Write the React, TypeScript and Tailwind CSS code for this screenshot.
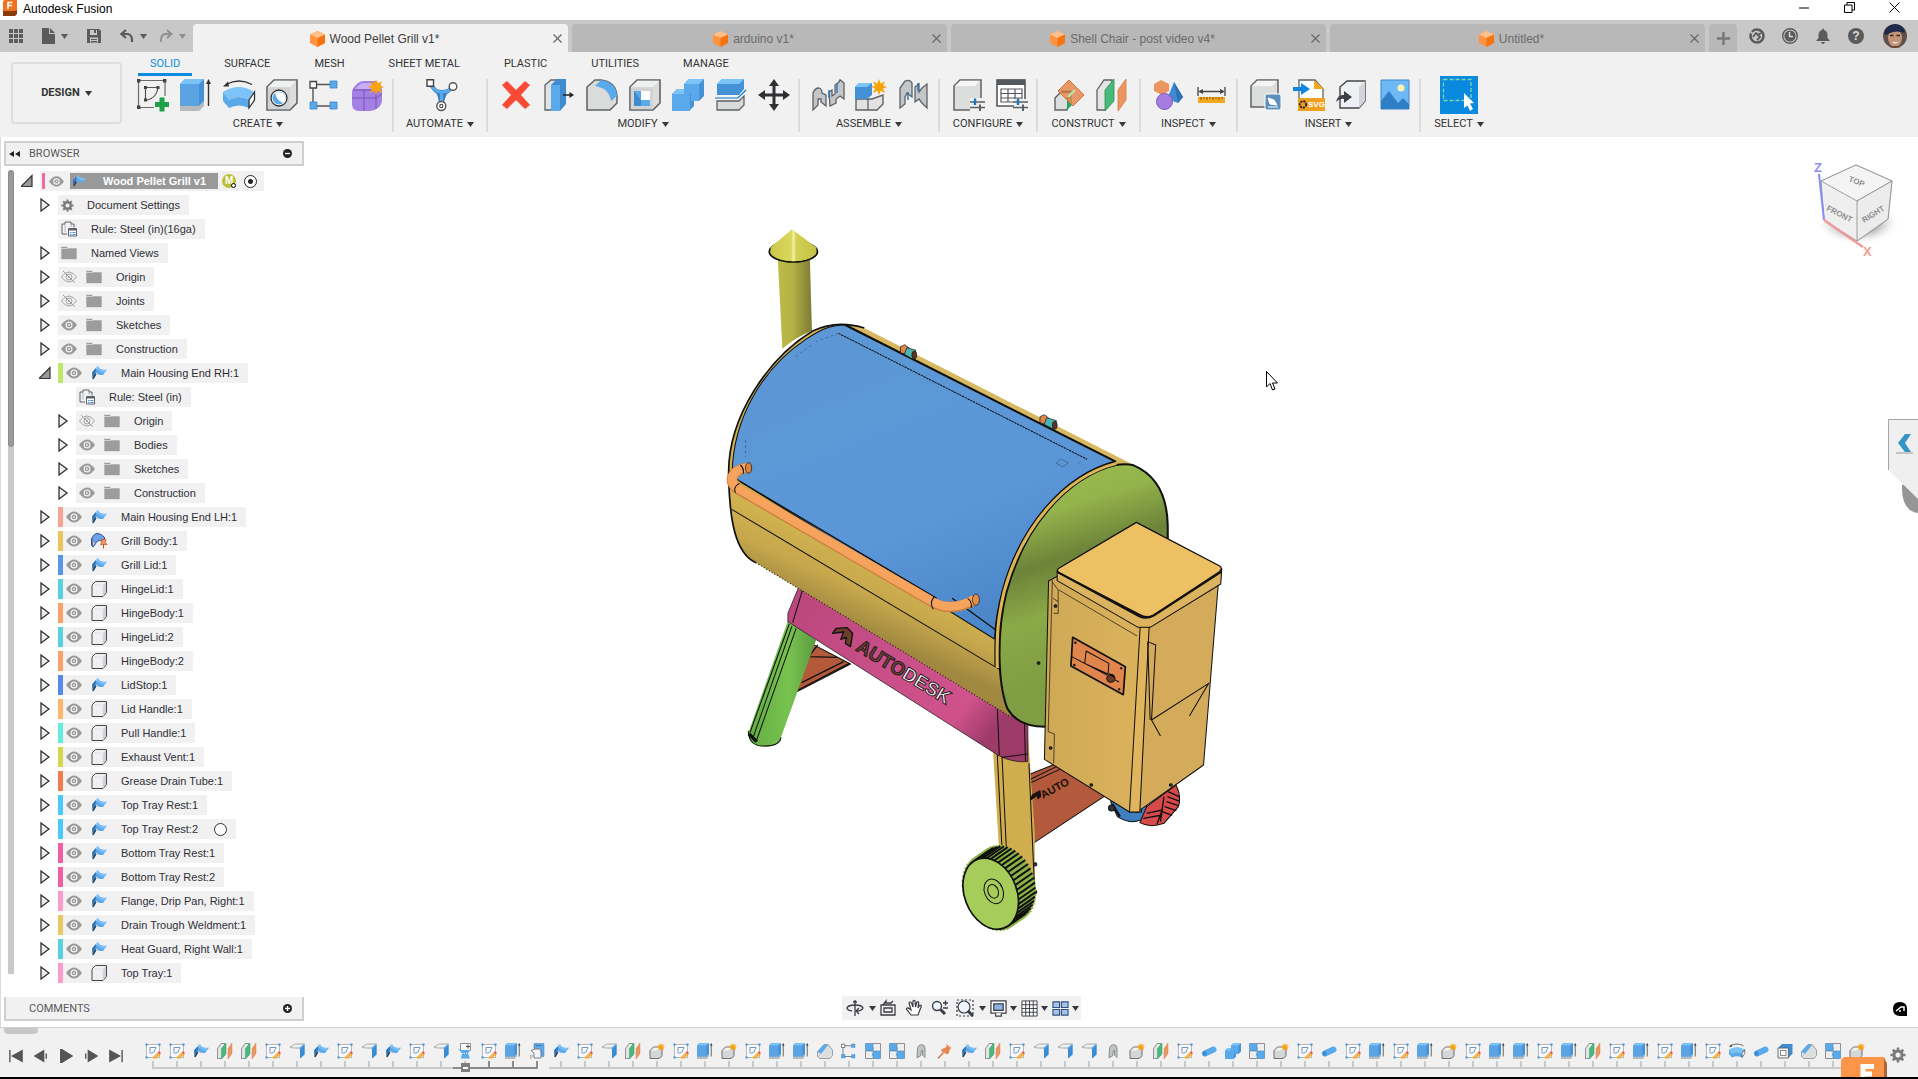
import type { ReactNode } from 'react'

const blue = '#5aa9ea';
const blueTop = '#7cc3f8';
const line = '#5f6266';

const cubeGray = (
  <>
    <path d="M1 8 L8 1 H31 V24 L24 31 H1Z" fill="#dcdddd" stroke={line} strokeWidth="1.6" />
    <path d="M1.8 8.5 H24 V30.2 H1.8Z" fill="#d2d3d4" />
    <path d="M2 8 L8.5 1.8 H30 L24 8Z" fill="#f0f1f1" />
  </>
);

const star = (
  <path d="M24 0 L25.7 4.6 L30.2 2.2 L28 6.6 L32 8 L28 9.6 L30.2 14 L25.7 11.8 L24 16 L22.3 11.8 L17.8 14 L20 9.6 L16 8 L20 6.6 L17.8 2.2 L22.3 4.6Z" fill="#f7a30b" />
);

const config = (
  <>
    <path d="M17 23 H32 M17 28.5 H32" stroke="#5c5f63" strokeWidth="1.6" />
    <path d="M22 19.5 V26" stroke="#1377c8" strokeWidth="2.4" />
    <path d="M27 25.5 V32" stroke="#5c5f63" strokeWidth="2" />
  </>
);

const icons: Record<string, ReactNode> = {
  sketch: (
    <>
      <path d="M1.5 1.5 H28 V17 M1.5 1.5 V28.5 H17" fill="none" stroke="#6b6b6b" strokeWidth="1.2" />
      <path d="M0 0 h3.4 v3.4 h-3.4Z M26 0 h3.4 v3.4 h-3.4Z M0 26.5 h3.4 v3.4 h-3.4Z" fill="#444" />
      <path d="M8 8.5 H21 M8.5 8 V21 M21 8.5 Q20 19 9 21.5" fill="none" stroke="#555" strokeWidth="1.2" />
      <path d="M7 7 h3 v3 h-3Z M19.5 7 h3 v3 h-3Z M7 19.5 h3 v3 h-3Z" fill="#444" />
      <path d="M22.5 18.5 h5 v4.5 h4.5 v5 h-4.5 v4.5 h-5 v-4.5 h-4.5 v-5 h4.5Z" fill="#1fa04a" />
    </>
  ),
  extrude: (
    <>
      <path d="M0 27 H19 L24 22 V27 L19 32 H0Z" fill="#b9babb" />
      <path d="M0 5 L5 0 H24 V22 L19 27 H0Z" fill="#4491d6" />
      <path d="M0 5 H19 V27 H0Z" fill="#5ba4e4" />
      <path d="M0 5 L5 0 H24 L19 5Z" fill={blueTop} />
      <path d="M28.5 27 V3" stroke="#333" strokeWidth="1.4" />
      <path d="M28.5 0 L31 5 H26Z" fill="#333" />
    </>
  ),
  revolve: (
    <>
      <path d="M3 5.5 Q16 -1.5 29 5.5" fill="none" stroke="#333" strokeWidth="1.4" />
      <path d="M0 7.5 L5 2.5 L6 7.5Z" fill="#333" />
      <path d="M0 13 Q16 3 31 13 L26 21 Q16 15 6 21Z" fill={blueTop} />
      <path d="M0 13 L6 21 Q16 15 26 21 V29 Q16 24 6 29 L0 22Z" fill={blue} />
      <path d="M26 21 L31.5 13 V21 L26 29Z" fill="#fff" stroke="#333" strokeWidth="1.3" />
    </>
  ),
  hole: (
    <>
      {cubeGray}
      <circle cx="13" cy="19" r="8" fill="#fff" stroke="#333" strokeWidth="1.3" />
      <circle cx="13" cy="19" r="6.5" fill={blue} />
      <path d="M9 13.500 Q18 11 19.500 19 Q19 23 17 24 Q10 21 9 13.500Z" fill="#fff" />
    </>
  ),
  pattern: (
    <>
      <path d="M4 5.5 H24 M4 6 V27 M4 27 H24" stroke="#555" strokeWidth="1.4" />
      <path d="M1 2.5 h6.5 v6.5 h-6.5Z" fill="#fff" stroke="#444" strokeWidth="1.3" />
      <path d="M21 2 h7 v7 h-7Z M1 23 h7 v7 h-7Z M21 23 h7 v7 h-7Z" fill={blue} stroke="#3b86c9" strokeWidth="0.8" />
    </>
  ),
  form: (
    <>
      <path d="M0 14 Q0 9 4 6 Q7 2 12 2 H22 Q30 4 30 12 V22 Q29 28 24 30 Q22 32 14 32 H7 Q0 32 0 25Z" fill="#a580e4" />
      <path d="M2 12 Q7 4 12 4 H22 Q27 6 27 10 H4Z" fill="#c8adf6" />
      <path d="M12 10 V32 M0 19 H24 L30 15 M24 10 V30 M1 11 H25" fill="none" stroke="#6b4bab" strokeWidth="0.8" />
      {star}
    </>
  ),
  automate: (
    <>
      <path d="M4 5 L10 12 Q16 14 22 12 L27 8 M11 12 Q15 17 15 27 M21 12 Q16 17 16 27" fill="none" stroke="#3d7fc0" strokeWidth="4" />
      <path d="M4 5 L10 12 Q16 14 22 12 L27 8 M15.5 14 V26" fill="none" stroke={blue} strokeWidth="3" />
      <path d="M1 0.8 h6.5 v6.5 h-6.5Z" fill="#fff" stroke="#444" strokeWidth="1.4" />
      <circle cx="27" cy="7.5" r="3.8" fill="#fff" stroke="#555" strokeWidth="1.4" />
      <circle cx="15.3" cy="27" r="4.5" fill="#fff" stroke="#555" strokeWidth="1.4" />
      <circle cx="15.3" cy="27" r="1.6" fill="none" stroke="#555" strokeWidth="1.2" />
    </>
  ),
  remove: <path d="M2 6 L7 2 L16 11 L25 2 L30 6 L21 16 L30 26 L25 30 L16 21 L7 30 L2 26 L11 16Z" fill="#f84a34" />,
  pressPull: (
    <>
      <path d="M2 6 L8 1 H14 V26 L8 31 H2Z" fill="#e2e2e2" stroke={line} strokeWidth="1.3" />
      <path d="M8 6 L14 0 H23 V25 L17 32 H8Z" fill="#3f8bd0" />
      <path d="M8 6 H17 V32 H8Z" fill={blue} />
      <path d="M20 16 H28" stroke="#222" strokeWidth="1.5" />
      <path d="M31 16 L26.5 13 V19Z" fill="#222" />
    </>
  ),
  fillet: (
    <>
      <path d="M1 8 L9 1 H15 Q30 3 31 17 V24 L24 31 H1Z" fill="#dadbdb" stroke={line} strokeWidth="1.5" />
      <path d="M9 7 L15 1 Q30 3 31 17 L25 22 Q23 9 9 7Z" fill={blue} />
    </>
  ),
  shell: (
    <>
      {cubeGray}
      <path d="M5 12 H21 V27 H5Z" fill={blue} />
      <path d="M12 12 H21 V21 H12Z" fill="#fff" />
      <path d="M5 12 L12 21 V27 H5Z" fill="#3f8bd0" />
    </>
  ),
  combine: (
    <>
      <path d="M0 15 L5 10 H12 V5 L17 0 H32 V17 L27 22 H22 V27 L17 32 H0Z" fill="#4491d6" />
      <path d="M12 5 H27 V22 H19 V15 H12Z M0 15 H18 V32 H0Z" fill={blue} />
      <path d="M12 5 L17 0 H32 L27 5Z M0 15 L5 10 H12 V15Z" fill={blueTop} />
    </>
  ),
  split: (
    <>
      <path d="M2 5 L7 0 H29 V10 L24 16 H2Z" fill="#4491d6" />
      <path d="M2 5 L7 0 H29 L24 5Z" fill={blueTop} />
      <path d="M0 19 H23 L31 11" fill="none" stroke="#1377c8" strokeWidth="1.2" />
      <path d="M2 22 H24 L29 17 V26 L24 31 H2Z" fill="#d9dada" stroke={line} strokeWidth="1.3" />
    </>
  ),
  move: <path d="M16 0 L21 7 H17.5 V14.5 H25 V11 L32 16 L25 21 V17.5 H17.5 V25 H21 L16 32 L11 25 H14.5 V17.5 H7 V21 L0 16 L7 11 V14.5 H14.5 V7 H11Z" fill="#2e3033" />,
  joint: (
    <>
      <path d="M1 14 Q3 9 7 9 Q10 10 10 14 L14 16 V27 L9 23 V20 H6 V26 L1 31Z" fill="#c4c6c8" stroke={line} strokeWidth="1.3" />
      <path d="M17 13 L20 11 V17 L23 15 V6 L27 3 L28 0.8 L32 4 V20 L28 17 L24 20 V24 L18 27Z" fill="#c4c6c8" stroke={line} strokeWidth="1.3" />
      <path d="M17 11 V19 M25 5 V14" stroke="#1377c8" strokeWidth="1.3" />
    </>
  ),
  newComponent: (
    <>
      <path d="M1 20 H17 L28 16 V25 L22 31 H1Z" fill="#e2e2e2" stroke={line} strokeWidth="1.4" />
      <path d="M13 20 V31" stroke={line} strokeWidth="1.3" />
      <path d="M0 8 L4 4 H17 V16 L12 20 H0Z" fill="#4491d6" />
      <path d="M0 8 L4 4 H17 L12 8Z" fill={blueTop} />
      {star}
    </>
  ),
  asBuilt: (
    <>
      <path d="M2 9 L7 2 Q12 0 14 4 V18 L9 14 L7 18 V25 L2 29Z" fill="#c4c6c8" stroke={line} strokeWidth="1.3" />
      <path d="M17 8 L21 5 V13 L24 9 L29 5 V29 L24 24 L21 20 L17 23Z" fill="#c4c6c8" stroke={line} strokeWidth="1.3" />
      <path d="M10 13 V21 M20 4 V12" stroke="#1377c8" strokeWidth="1.4" />
    </>
  ),
  configure: (
    <>
      <path d="M1 7 L7 1 H28 V24 L22 31 H1Z" fill="#dcdddd" stroke={line} strokeWidth="1.5" />
      <path d="M2 7 L7.5 1.8 H27 L22 7Z" fill="#f5f5f5" />
      <path d="M17 19 H32 V32 H17Z" fill="#f1f1f1" />
      {config}
    </>
  ),
  configTable: (
    <>
      <path d="M1 1 H29 V27 H1Z" fill="#fff" stroke="#55585c" strokeWidth="1.6" />
      <path d="M1 0.5 H29 V6 H1Z" fill="#55585c" />
      <path d="M5 10 H26 V23 H5Z M12 10 V23 M19 10 V23 M5 14.5 H26 M5 19 H26" fill="none" stroke="#55585c" strokeWidth="1.2" />
      <path d="M18 20 H32 V32 H18Z" fill="#f1f1f1" />
      {config}
    </>
  ),
  planeAngle: (
    <>
      <path d="M2 19 L9 12 H19 L14 31 H2Z" fill="#dcdddd" stroke={line} strokeWidth="1.4" />
      <path d="M14 20 L19 12 V26 L14 31Z" fill="#1fa565" />
      <path d="M16 1 L31 16 L20 27 L5 12Z" fill="#e88a50" fillOpacity="0.85" stroke="#d27237" strokeWidth="1" />
      <path d="M9 13 H20 L14 20" fill="none" stroke="#8c6a4c" />
      <path d="M15 18 L22 11" stroke="#bfe3a8" strokeWidth="2.4" />
    </>
  ),
  offsetPlane: (
    <>
      <path d="M1 11 L8 1 H16 V22 L9 31 H1Z" fill="#e4e4e4" stroke={line} strokeWidth="1.3" />
      <path d="M9 11 L18 0 V22 L9 32Z" fill="#49b87b" stroke="#249255" strokeWidth="0.8" />
      <path d="M22 11 L30 0 V21 L22 32Z" fill="#eb9561" stroke="#d97b43" strokeWidth="0.8" />
    </>
  ),
  inspect: (
    <>
      <path d="M8 1 L16 5 V12 L9 16 L1 12 V5Z" fill="#eb9561" />
      <path d="M21 3 L30 18 L25 24 L14 20Z" fill="#3f8bd0" />
      <path d="M21 3 L30 18 L25 24Z" fill="#2f70b2" />
      <circle cx="11.5" cy="22.5" r="8" fill="#a57de0" stroke="#8257c0" />
    </>
  ),
  measure: (
    <>
      <path d="M2 8 V17 M29 8 V17 M4 12.5 H27" stroke="#444" strokeWidth="1.3" />
      <path d="M2 12.5 L7 10 V15Z M29 12.5 L24 10 V15Z" fill="#444" />
      <path d="M2 18 H29 V24 H2Z" fill="#f6a821" />
      <path d="M5 18 v3 M8 18 v2 M11 18 v3 M14 18 v2 M17 18 v3 M20 18 v2 M23 18 v3 M26 18 v2" stroke="#7d5510" />
    </>
  ),
  derive: (
    <>
      <path d="M1 7 L7 1 H28 V24 L22 28 H1Z" fill="#dcdddd" stroke={line} strokeWidth="1.5" />
      <path d="M2 7 L7.5 1.8 H27 L22 7Z" fill="#f5f5f5" />
      <rect x="15" y="15" width="16" height="16" rx="2" fill="#5d8fbd" stroke="#fff" />
      <path d="M18 19 L24 21 L27 26 L20 25Z M18 28 H28" fill="#fff" stroke="#fff" />
    </>
  ),
  insertSvg: (
    <>
      <path d="M6 1 H22 L30 10 V31 H6Z" fill="#fff" stroke={line} strokeWidth="1.3" />
      <path d="M21 1 L31 10 H21Z" fill="#f6a821" />
      <path d="M5 19 H32 V32 H5Z" fill="#f0a020" />
      <circle cx="10" cy="25.5" r="3.2" fill="none" stroke="#222" strokeWidth="2" strokeDasharray="2 1" />
      <text x="15" y="28" fontSize="8" fontWeight="bold" fill="#fff" fontFamily="Liberation Sans, sans-serif">SVG</text>
      <path d="M0 8 H8 V4 L17 10 L8 16 V12 H0Z" fill="#0f86e4" />
    </>
  ),
  insertMesh: (
    <>
      <path d="M4 8 L11 2 H29 V22 L23 29 H4Z" fill="#eef0f3" stroke="#444" strokeWidth="1.4" />
      <path d="M23 8 L29 2 V22 L23 29Z" fill="#d3d5da" />
      <path d="M0 23 Q2 15 8 16 V12 L16 18 L8 24 V20 Q4 19 0 23Z" fill="#3c3f45" />
    </>
  ),
  canvas: (
    <>
      <path d="M2 1 H30 V30 H2Z" fill="#6db8f5" stroke="#3c86c8" />
      <path d="M2 22 L10 12 L19 24 L24 19 L30 25 V30 H2Z" fill="#2f7fc6" />
      <circle cx="22" cy="9" r="3.5" fill="#fdf3b4" />
    </>
  ),
  editSketch: (
    <>
      <path d="M3 3 H29 V29 H3Z" fill="#fafafa" stroke="#a3a6aa" strokeWidth="1.6" />
      <path d="M1 1 h4 v4 h-4Z M27 1 h4 v4 h-4Z M1 27 h4 v4 h-4Z" fill="#3e8edb" />
      <path d="M10 9 H22 V11 M10 9 V21 M21 11 Q20 20 12 21" fill="none" stroke="#5d8bc4" strokeWidth="1.8" />
      <path d="M17 27 L25 19 L30 23 L22 31 L16 32Z" fill="#f6b23b" />
      <path d="M25 19 L28 16 L32 20 L30 23Z" fill="#e8604c" />
    </>
  ),
  flange: (
    <>
      <path d="M2 15 L10 6 L16 11 Q24 15 32 9 L24 20 Q14 21 10 16Z" fill={blue} />
      <path d="M10 3 L15 3 Q18 11 32 9 L27 15 Q15 16 10 3Z" fill="#79bdf5" />
      <path d="M2 15 L10 6 L9 19 L3 29Z" fill="#2f73b8" />
      <path d="M4 28 L10 18" stroke="#333" strokeWidth="2.5" />
    </>
  ),
  bend: (
    <>
      <path d="M2 8 L12 2 H31 L22 10 H8Z" fill="#eef0f2" stroke="#888c90" strokeWidth="1.4" />
      <path d="M20 10 L31 2 V23 L22 31 V13Z" fill={blue} />
      <path d="M22 13 L31 4 V23 L22 31Z" fill="#3a8ad6" />
    </>
  ),
  unfold: (
    <>
      <path d="M7 1 H27 V15 H7Z" fill="#fafafa" stroke="#777" strokeWidth="1.6" />
      <path d="M18 7 H26 M22 3 V11" stroke="#555" strokeWidth="2" />
      <path d="M2 11 L8 14 H26 L22 21 L26 31 H8 L10 21Z" fill={blue} />
      <path d="M10 21 H22" stroke="#fff" strokeWidth="1.5" strokeDasharray="2 2" />
    </>
  ),
  refold: (
    <>
      <path d="M10 1 H30 V27 H24 V11 H10Z" fill={blue} stroke="#3d7fc0" />
      <path d="M4 15 L12 12 H22 L24 18 V30 H10 V20Z" fill="#f2f2f2" stroke="#777" strokeWidth="1.8" />
      <path d="M2 26 H8 M2 30 H6 M13 5 H26" stroke="#555" strokeWidth="1.5" strokeDasharray="3 1" />
    </>
  ),
  component: (
    <>
      <path d="M2 15 L9 8 H26 V25 Q24 31 18 31 H2Z" fill="#d5d6d6" stroke="#6d7073" strokeWidth="2" />
      <path d="M4 15 L10 9.5 H22 L17 15Z" fill="#f2f2f2" />
      {star}
    </>
  ),
  chamfer: (
    <>
      <path d="M1 17 L14 3 H22 L31 14 V25 L26 31 H6 L1 27Z" fill="#dddede" stroke="#8a8d90" strokeWidth="1.6" />
      <path d="M1 17 L14 3 L22 4 L8 22Z" fill={blue} />
    </>
  ),
  checker: (
    <>
      <path d="M1 1 H31 V31 H1Z" fill="#eee" stroke="#777" strokeWidth="1.6" />
      <path d="M1 1 H16 V8 Q20 12 16 13 V16 H1Z M16 16 H31 V31 H16 V26 Q11 23 16 20Z" fill={blue} />
      <path d="M16 16 H12 Q10 12 7 16 M16 1 V31 M1 16 H31" stroke="#5f87aa" strokeWidth="1.2" fill="none" />
    </>
  ),
  smallJoint: (
    <path d="M9 9 Q12 3 17 3 Q24 4 24 10 V29 L19 24 V14 L16 18 V25 L8 30Z" fill="#c0c2c4" stroke="#85888b" strokeWidth="1.8" />
  ),
  pin: (
    <>
      <path d="M18 2 L29 10 L26 12 L24 20 L20 23 L7 15 L12 11 L19 8Z" fill="#e88a50" />
      <path d="M2 31 L13 19" stroke="#cf6f35" strokeWidth="2.5" />
    </>
  ),
  tube: (
    <>
      <path d="M8 21 L25 13" stroke={blue} strokeWidth="12" strokeLinecap="round" />
      <ellipse cx="7" cy="21" rx="4" ry="5" fill="#3a8ad6" />
    </>
  ),
  shellBox: (
    <>
      <path d="M2 10 L10 2 H31 V21 L23 30 H2Z" fill="#3f8bd0" />
      <path d="M2 10 H23 V30 H2Z" fill="#eef0f2" stroke="#555" strokeWidth="1.6" />
      <path d="M7 15 H18 V25 H7Z" fill="#fff" stroke="#666" strokeWidth="1.5" />
    </>
  ),
  body: (
    <>
      <path d="M2 8 L9 1 H31 V23 L24 31 H2Z" fill="#eff0f2" stroke="#44474e" strokeWidth="2" strokeLinejoin="round" />
      <path d="M24 8 L30 2 V22 L24 30Z" fill="#cfd1d6" />
      <path d="M3 8 H24 V30" fill="none" stroke="#d9dbde" strokeWidth="1.2" />
    </>
  ),
  pinnedFlange: (
    <>
      <path d="M1 12 Q6 0 14 1 Q22 2 28 10 L22 16 Q16 13 12 17 L4 28 L1 24Z" fill="#6da3ea" stroke="#2b3f78" strokeWidth="1.8" />
      <path d="M2 13 L10 20 L4 28Z" fill="#b9bfd8" stroke="#2b3f78" />
      <path d="M20 13 h10 l-2 5 l4 5 h-13 l3 -5Z" fill="#f49a5c" stroke="#b9501d" strokeWidth="1.5" />
      <path d="M25 23 V31" stroke="#b9501d" strokeWidth="2" />
    </>
  ),
  folder: <path d="M0 3 H12 L14 6 H32 V29 H0Z M0 7 H14" fill="#9c9c9e" stroke="#f1f1f1" strokeWidth="1.2" />,
  gear: (
    <>
      <circle cx="16" cy="16" r="8" fill="none" stroke="#7b7b7d" strokeWidth="6" />
      <path d="M16 1 V7 M16 25 V31 M1 16 H7 M25 16 H31 M5.5 5.5 L10 10 M22 22 L26.5 26.5 M26.5 5.5 L22 10 M5.5 26.5 L10 22" stroke="#7b7b7d" strokeWidth="5" />
    </>
  ),
  rule: (
    <>
      <path d="M2 6 H8 V2 H20 V6 H26 V13 M2 6 V26 H12" fill="none" stroke="#5e6268" strokeWidth="2" />
      <path d="M8 7 V21 M20 7 V12" stroke="#5e6268" strokeWidth="1.5" strokeDasharray="2 2" />
      <path d="M15 15 H31 V30 H15Z" fill="#fff" stroke="#5e6268" strokeWidth="2" />
      <path d="M15 16 H31 V19 H15Z" fill="#5e6268" />
      <path d="M18 23 H21 M23 23 H29 M18 27 H21 M23 27 H29" stroke="#3e8edb" strokeWidth="2" />
    </>
  ),
  eye: (
    <>
      <path d="M0 16 Q8 5 16 5 Q24 5 32 16 Q24 27 16 27 Q8 27 0 16Z" fill="#9a9a9c" />
      <circle cx="16" cy="16" r="7" fill="#f1f1f1" />
      <circle cx="16" cy="16" r="4.5" fill="#9a9a9c" />
      <circle cx="16" cy="16" r="1.8" fill="#f1f1f1" />
    </>
  ),
  eyeOff: (
    <>
      <path d="M1 16 Q8 6 16 6 Q24 6 31 16 Q24 26 16 26 Q8 26 1 16Z" fill="none" stroke="#9a9a9c" strokeWidth="1.8" />
      <circle cx="16" cy="16" r="6" fill="none" stroke="#9a9a9c" strokeWidth="1.8" />
      <circle cx="16" cy="16" r="2" fill="#9a9a9c" />
      <path d="M4 4 L28 28" stroke="#9a9a9c" strokeWidth="1.8" />
    </>
  ),
};

const Icon = ({ name, className = 'size-8' }: { name: string; className?: string }) => (
  <svg viewBox="0 0 32 32" className={`shrink-0 overflow-visible ${className}`} aria-hidden="true">{icons[name]}</svg>
);

const Caret = ({ className = 'text-[#3a3a3a]' }: { className?: string }) => (
  <svg viewBox="0 0 7 5" className={`h-[5px] w-[7px] shrink-0 ${className}`} aria-hidden="true">
    <path d="M0 0 H7 L3.5 5Z" fill="currentColor" />
  </svg>
);

const DocCube = () => (
  <svg viewBox="0 0 15 16" className="h-4 w-[15px] shrink-0" aria-hidden="true">
    <path d="M7.5 0 L15 3.5 V12 L7.5 16 L0 12 V3.5Z" fill="#ff9340" />
    <path d="M7.5 0 L15 3.5 L7.5 7 L0 3.5Z" fill="#ffc08c" />
    <path d="M7.5 7 L15 3.5 V12 L7.5 16Z" fill="#f57310" />
  </svg>
);

const docs = [
  { name: 'Wood Pellet Grill v1*', active: true },
  { name: 'arduino v1*', active: false },
  { name: 'Shell Chair - post video v4*', active: false },
  { name: 'Untitled*', active: false },
];

const ribbonTabs = ['SOLID', 'SURFACE', 'MESH', 'SHEET METAL', 'PLASTIC', 'UTILITIES', 'MANAGE'];

const groups = [
  { label: 'CREATE', cls: 'w-[264px] pr-[6px]', items: ['sketch', 'extrude', 'revolve', 'hole', 'pattern', 'form'] },
  { label: 'AUTOMATE', cls: 'w-[94px]', items: ['automate'] },
  { label: 'MODIFY', cls: 'w-[312px]', items: ['remove', 'pressPull', 'fillet', 'shell', 'combine', 'split', 'move'] },
  { label: 'ASSEMBLE', cls: 'w-[140px]', items: ['joint', 'newComponent', 'asBuilt'] },
  { label: 'CONFIGURE', cls: 'w-[98px]', items: ['configure', 'configTable'] },
  { label: 'CONSTRUCT', cls: 'w-[103px]', items: ['planeAngle', 'offsetPlane'] },
  { label: 'INSPECT', cls: 'w-[97px]', items: ['inspect', 'measure'] },
  { label: 'INSERT', cls: 'w-[183px]', items: ['derive', 'insertSvg', 'insertMesh', 'canvas'] },
];

type Node = {
  label: string;
  kind: string;
  level?: number;
  open?: boolean;
  eye?: 'eye' | 'eyeOff';
  color?: string;
  leaf?: boolean;
  ring?: boolean;
};

const nodes: Node[] = [
  { label: 'Document Settings', kind: 'gear' },
  { label: 'Rule: Steel (in)(16ga)', kind: 'rule', leaf: true },
  { label: 'Named Views', kind: 'folder' },
  { label: 'Origin', kind: 'folder', eye: 'eyeOff' },
  { label: 'Joints', kind: 'folder', eye: 'eyeOff' },
  { label: 'Sketches', kind: 'folder', eye: 'eye' },
  { label: 'Construction', kind: 'folder', eye: 'eye' },
  { label: 'Main Housing End RH:1', kind: 'flange', eye: 'eye', color: 'bg-[#bce86c]', open: true },
  { label: 'Rule: Steel (in)', kind: 'rule', level: 2, leaf: true },
  { label: 'Origin', kind: 'folder', eye: 'eyeOff', level: 2 },
  { label: 'Bodies', kind: 'folder', eye: 'eye', level: 2 },
  { label: 'Sketches', kind: 'folder', eye: 'eye', level: 2 },
  { label: 'Construction', kind: 'folder', eye: 'eye', level: 2 },
  { label: 'Main Housing End LH:1', kind: 'flange', eye: 'eye', color: 'bg-[#f4a394]' },
  { label: 'Grill Body:1', kind: 'pinnedFlange', eye: 'eye', color: 'bg-[#eac55f]' },
  { label: 'Grill Lid:1', kind: 'flange', eye: 'eye', color: 'bg-[#5796e6]' },
  { label: 'HingeLid:1', kind: 'body', eye: 'eye', color: 'bg-[#5ad0de]' },
  { label: 'HingeBody:1', kind: 'body', eye: 'eye', color: 'bg-[#fba068]' },
  { label: 'HingeLid:2', kind: 'body', eye: 'eye', color: 'bg-[#5ad0de]' },
  { label: 'HingeBody:2', kind: 'body', eye: 'eye', color: 'bg-[#fba068]' },
  { label: 'LidStop:1', kind: 'flange', eye: 'eye', color: 'bg-[#5789ec]' },
  { label: 'Lid Handle:1', kind: 'body', eye: 'eye', color: 'bg-[#fdb66c]' },
  { label: 'Pull Handle:1', kind: 'body', eye: 'eye', color: 'bg-[#62ecdf]' },
  { label: 'Exhaust Vent:1', kind: 'body', eye: 'eye', color: 'bg-[#d3d84e]' },
  { label: 'Grease Drain Tube:1', kind: 'body', eye: 'eye', color: 'bg-[#f07e4c]' },
  { label: 'Top Tray Rest:1', kind: 'flange', eye: 'eye', color: 'bg-[#4bc9f8]' },
  { label: 'Top Tray Rest:2', kind: 'flange', eye: 'eye', color: 'bg-[#4bc9f8]', ring: true },
  { label: 'Bottom Tray Rest:1', kind: 'flange', eye: 'eye', color: 'bg-[#f05fa6]' },
  { label: 'Bottom Tray Rest:2', kind: 'flange', eye: 'eye', color: 'bg-[#f05fa6]' },
  { label: 'Flange, Drip Pan, Right:1', kind: 'flange', eye: 'eye', color: 'bg-[#fb9dcc]' },
  { label: 'Drain Trough Weldment:1', kind: 'flange', eye: 'eye', color: 'bg-[#e8c964]' },
  { label: 'Heat Guard, Right Wall:1', kind: 'flange', eye: 'eye', color: 'bg-[#5ad0de]' },
  { label: 'Top Tray:1', kind: 'body', eye: 'eye', color: 'bg-[#fb9dcc]' },
];

const timelineKeys: Record<string, string> = {
  s: 'editSketch', f: 'flange', p: 'offsetPlane', b: 'bend', u: 'unfold', e: 'extrude', r: 'refold', c: 'component',
  h: 'chamfer', t: 'pattern', k: 'checker', j: 'smallJoint', n: 'pin', o: 'tube', m: 'combine', v: 'revolve', x: 'shellBox',
};
const timeline = 'ssfppsbfsbfsbuserfsbpcsecseehtkkjnfpsbbbjcpsomkcsosesecseesepsesesvoxhkc'.split('');

const Arrow = ({ open }: { open?: boolean }) => (
  <button className="flex h-5 w-[13px] items-center" aria-label={open ? 'Collapse' : 'Expand'}>
    <svg viewBox="0 0 12 14" className="h-[14px] w-3" aria-hidden="true">
      {open ? (
        <path d="M0 12.5 L11 1.5 V12.5Z" fill="#999" stroke="#333" strokeWidth="1.2" />
      ) : (
        <path d="M2 1 L10 7 L2 13Z" fill="#eee" stroke="#333" strokeWidth="1.3" />
      )}
    </svg>
  </button>
);

const TreeRow = ({ node }: { node: Node }) => {
  const { label, kind, level, open, eye, color, leaf, ring } = node;
  return (
    <li className={`flex h-6 items-center ${level === 2 ? 'pl-[57px]' : 'pl-[39px]'}`}>
      <span className="w-[19px]">{!leaf && <Arrow open={open} />}</span>
      <div className="flex h-5 items-center bg-[#f1f1f1] pr-[9px]">
        {color && <span className={`h-5 w-[5px] ${color}`} />}
        {eye && (
          <button className="ml-[3px] flex w-[25px]" aria-label="Toggle visibility">
            <Icon name={eye} className="size-4" />
          </button>
        )}
        <Icon name={kind} className={`${eye ? '' : 'ml-[3px]'} ${kind === 'gear' ? 'size-[13px]' : 'size-4'}`} />
        <span className={`${kind === 'gear' ? 'ml-[13px]' : 'ml-[14px]'} whitespace-nowrap text-[11px] text-[#2f2f38]`}>{label}</span>
        {ring && <span className="ml-4 size-[13px] rounded-full border border-[#333] bg-white" />}
      </div>
    </li>
  );
};

const TopBar = () => (
  <>
    <header className="flex h-5 items-center justify-between bg-white pl-[3px] pr-[18px]">
      <div className="flex items-center gap-[6px]">
        <svg viewBox="0 0 14 16" className="mb-1 h-4 w-[14px]" aria-hidden="true">
          <path d="M1 0 H14 V13 L12 16 H0 V2Z" fill="#f2711c" />
          <path d="M0 11 H12 L14 10 V14 L12 16 H0Z" fill="#8a3a0c" />
          <path d="M5 9 V2.5 H9.5 M5 5.5 H9" stroke="#fff" strokeWidth="1.6" fill="none" />
        </svg>
        <h1 className="pb-[2px] text-xs leading-4 text-black">Autodesk Fusion</h1>
      </div>
      <div className="flex items-center gap-[34px] pb-[6px]">
        <button aria-label="Minimize"><svg viewBox="0 0 11 11" className="size-[11px]"><path d="M0 6 H10" stroke="#000" /></svg></button>
        <button aria-label="Restore"><svg viewBox="0 0 11 11" className="size-[11px]"><path d="M0.5 3 H8 V10.5 H0.5Z M3 3 V0.5 H10.5 V8 H8" fill="none" stroke="#000" /></svg></button>
        <button aria-label="Close"><svg viewBox="0 0 11 11" className="size-[11px]"><path d="M0.5 0.5 L10.5 10.5 M10.5 0.5 L0.5 10.5" stroke="#000" /></svg></button>
      </div>
    </header>
    <div className="flex h-8 items-end bg-[#c8c8c8]">
      <div className="flex h-8 w-[193px] shrink-0 items-center pl-[9px] text-[#5b5b5b]">
        <button aria-label="Show data panel">
          <svg viewBox="0 0 14 14" className="size-[14px]"><path d="M0 0h4v4H0zM5 0h4v4H5zM10 0h4v4h-4zM0 5h4v4H0zM5 5h4v4H5zM10 5h4v4h-4zM0 10h4v4H0zM5 10h4v4H5zM10 10h4v4h-4z" fill="currentColor" /></svg>
        </button>
        <button className="ml-[19px] flex items-center gap-[6px]" aria-label="File">
          <svg viewBox="0 0 13 16" className="h-4 w-[13px]"><path d="M0 0H7V6H13V16H0Z M8 0L13 5H8Z" fill="currentColor" /></svg>
          <Caret className="text-[#5b5b5b]" />
        </button>
        <button className="ml-[19px]" aria-label="Save">
          <svg viewBox="0 0 14 14" className="size-[14px]"><path d="M0 0H12L14 2V14H0Z" fill="currentColor" /><path d="M3 1h7v5H3z M3 8.5h8v5H3z" fill="#c8c8c8" /><path d="M7 1h2v3H7z M4 10h6v1H4z M4 12h6v1H4z" fill="currentColor" /></svg>
        </button>
        <button className="ml-[19px] flex items-center gap-[6px]" aria-label="Undo">
          <svg viewBox="0 0 14 14" className="size-[14px]"><path d="M6 1 L1.5 5 L6 9 M2 5 H8 Q12.5 6 12 13" fill="none" stroke="currentColor" strokeWidth="2.2" /></svg>
          <Caret className="text-[#5b5b5b]" />
        </button>
        <button className="ml-[12px] flex items-center gap-[6px] text-[#8e8e8e]" aria-label="Redo">
          <svg viewBox="0 0 14 14" className="size-[14px]"><path d="M8 1 L12.5 5 L8 9 M12 5 H6 Q1.5 6 2 13" fill="none" stroke="currentColor" strokeWidth="1.8" /></svg>
          <Caret className="text-[#8e8e8e]" />
        </button>
      </div>
      <nav className="flex flex-1 gap-1">
        {docs.map((d) => (
          <div key={d.name} className={`flex h-7 flex-1 items-center rounded-t pl-[10px] ${d.active ? 'bg-[#f1f1f1] text-[#3c3c3c]' : 'bg-[#b8b8b8] text-[#6a6a6a]'}`}>
            <button className="flex flex-1 items-center justify-center gap-[5px] pt-[2px] text-xs">
              <DocCube />
              {d.name}
            </button>
            <button className="flex w-[22px] justify-center" aria-label={`Close ${d.name}`}>
              <svg viewBox="0 0 9 9" className="size-[9px]"><path d="M0.5 0.5 L8.5 8.5 M8.5 0.5 L0.5 8.5" stroke="#6a6a6a" strokeWidth="1.3" /></svg>
            </button>
          </div>
        ))}
        <button className="flex h-7 w-7 items-center justify-center rounded-t bg-[#b8b8b8]" aria-label="New design">
          <svg viewBox="0 0 13 13" className="size-[13px]"><path d="M6.5 0 V13 M0 6.5 H13" stroke="#777" strokeWidth="2.4" /></svg>
        </button>
      </nav>
      <div className="flex h-8 w-[181px] shrink-0 items-center gap-[17px] pl-[12px]">
        <button aria-label="Extensions">
          <svg viewBox="0 0 16 16" className="size-4"><circle cx="8" cy="8" r="6.5" fill="none" stroke="#5b5b5b" strokeWidth="2.6" /><path d="M0 2 L4 6 L7 3" fill="none" stroke="#c8c8c8" strokeWidth="1.6" /><path d="M4 9 L7 5 L9 7 L12 5 M8 12 L11 9 L9 7" fill="none" stroke="#5b5b5b" strokeWidth="1.8" /></svg>
        </button>
        <button aria-label="Job status">
          <svg viewBox="0 0 16 16" className="size-4"><circle cx="8" cy="8" r="7.3" fill="none" stroke="#5b5b5b" strokeWidth="1.4" /><circle cx="8" cy="8" r="5.6" fill="#5b5b5b" /><path d="M7.5 4 V8.5 H11" fill="none" stroke="#ddd" strokeWidth="1.4" /></svg>
        </button>
        <button aria-label="Notifications">
          <svg viewBox="0 0 16 16" className="size-4"><path d="M8 0.5 Q9 0.5 9 2 Q12.5 3 12.5 7 V10 L15 13 H1 L3.5 10 V7 Q3.5 3 7 2 Q7 0.5 8 0.5Z M6 14 H10 Q9.5 16 8 16 Q6.5 16 6 14Z" fill="#5b5b5b" /></svg>
        </button>
        <button className="size-4 rounded-full bg-[#5b5b5b] text-xs font-bold leading-4 text-[#ddd]">?</button>
        <button className="ml-[2px]" aria-label="Account">
          <svg viewBox="0 0 24 24" className="size-6">
            <clipPath id="face"><circle cx="12" cy="12" r="12" /></clipPath>
            <g clipPath="url(#face)">
              <path d="M0 0H24V24H0Z" fill="#5d5148" />
              <ellipse cx="12" cy="14" rx="7" ry="9" fill="#c39478" />
              <path d="M1 10 Q3 0 12 0 Q21 0 22 9 Q12 5 3 11Z" fill="#1d2a4a" />
              <path d="M7 11.5 H10.5 M13.5 11.5 H17" stroke="#3a251b" strokeWidth="1.5" />
              <path d="M8.5 18 Q12 21 15.5 18Z" fill="#f1e2da" />
              <path d="M3 24 Q12 20 21 24Z" fill="#6a4436" />
            </g>
          </svg>
        </button>
      </div>
    </div>
  </>
);

const Ribbon = () => (
  <div className="flex bg-[#f1f1f1] pb-[5px] font-[Roboto,sans-serif] text-[11px] leading-4 text-[#333]">
    <button className="ml-[11px] mt-[10px] flex h-[62px] w-[111px] shrink-0 items-center justify-center gap-[5px] rounded border-2 border-[#dedede] font-bold">
      DESIGN <Caret />
    </button>
    <div className="ml-2">
      <div className="flex h-6 gap-[20px] pl-2">
        {ribbonTabs.map((t, i) => (
          <button key={t} className={`h-6 whitespace-nowrap border-b-[3px] px-3 pt-[2px] ${i === 0 ? 'border-[#0c8ce0] text-[#0c8ce0]' : 'border-transparent'}`}>{t}</button>
        ))}
      </div>
      <div className="mt-[3px] flex">
        {groups.map((g) => (
          <section key={g.label} className={`flex shrink-0 flex-col items-center border-r-2 border-[#dcdcdc] ${g.cls}`}>
            <div className="flex h-8 pl-1">
              {g.items.map((name) => (
                <button key={name} className="flex w-[43px] shrink-0 items-center justify-center" aria-label={name}>
                  <Icon name={name} />
                </button>
              ))}
            </div>
            <button className="mt-[5px] flex h-4 items-center gap-1">{g.label}<Caret /></button>
          </section>
        ))}
        <section className="flex w-[76px] flex-col items-center">
          <div className="flex h-8 items-center">
            <button className="flex h-[38px] w-[38px] items-center justify-center bg-[#0a8ade]" aria-label="Select">
              <svg viewBox="0 0 38 38" className="size-[38px]">
                <path d="M3.5 3.5 H31 V24.5 H3.5Z" fill="none" stroke="#7fd6a4" strokeWidth="1.3" strokeDasharray="4 2" />
                <path d="M24 17 L34 27 L30 27.5 L33 33 L30 35 L27.5 29.5 L24 32Z" fill="#fff" />
              </svg>
            </button>
          </div>
          <button className="mt-[5px] flex h-4 items-center gap-1">SELECT<Caret /></button>
        </section>
      </div>
    </div>
  </div>
);

const Browser = () => (
  <aside className="w-[308px] pl-1">
    <div className="flex h-[25px] w-[300px] items-center border-2 border-[#cfcfcf] bg-[#f1f1f1] pl-[3px] font-[Roboto,sans-serif] text-[11px] text-[#5a5a5a]">
      <button aria-label="Hide browser">
        <svg viewBox="0 0 11 6" className="h-[6px] w-[11px]"><path d="M5 0 V6 L0 3Z M11 0 V6 L6 3Z" fill="#222" /></svg>
      </button>
      <span className="ml-[9px] flex-1 pt-px">BROWSER</span>
      <button className="mr-[10px]" aria-label="Collapse browser">
        <svg viewBox="0 0 9 9" className="size-[9px]"><circle cx="4.5" cy="4.5" r="4.5" fill="#222" /><path d="M2 4.5 H7" stroke="#fff" strokeWidth="1.3" /></svg>
      </button>
    </div>
    <div className="flex items-start pl-1 pt-[4px]">
      <div className="-mr-[8px] h-[804px] w-[6px] shrink-0 rounded-t bg-[#c9c9cb]">
        <div className="h-[277px] rounded-full border border-[#8c8c8c] bg-[#9a9a9a]" />
      </div>
      <ul className="-mt-px -ml-[6px]">
        <li className="flex h-6 items-center pl-[21px]">
          <span className="w-[19px]"><Arrow open /></span>
          <div className="flex h-5 items-center bg-[#f1f1f1] pr-[7px]">
            <span className="ml-[2px] h-4 w-[3px] bg-[#ee6aa4]" />
            <button className="ml-1 w-[21px]" aria-label="Toggle visibility"><Icon name="eye" className="size-[15px]" /></button>
            <span className="flex h-4 items-center bg-[#999] pl-[2px] pr-3">
              <Icon name="flange" className="size-[14px]" />
              <span className="ml-[17px] whitespace-nowrap text-[11px] font-bold text-white">Wood Pellet Grill v1</span>
            </span>
            <span className="relative ml-1 size-[14px] rounded-full bg-[#bcbf34] text-center text-[10px] font-bold leading-[14px] text-white">
              M<span className="absolute bottom-0 right-0 size-[5px] rounded-full border border-black bg-white" />
            </span>
            <input type="radio" aria-label="Activate component" defaultChecked className="ml-2 size-[13px] appearance-none rounded-full border border-[#222] bg-white bg-[radial-gradient(#222_2px,transparent_3px)]" />
          </div>
        </li>
        {nodes.map((n, i) => <TreeRow key={i} node={n} />)}
      </ul>
    </div>
  </aside>
);

// tread marks around the tyre, from the front rim to the rear rim
const treads = Array.from({ length: 46 }, (_, i) => {
  const t = (i / 46) * Math.PI * 2;
  const r = (-20 * Math.PI) / 180;
  const px = Math.cos(t) * 76;
  const py = Math.sin(t) * 110;
  return { x: 847 + px * Math.cos(r) - py * Math.sin(r), y: 2081 + px * Math.sin(r) + py * Math.cos(r) };
});

const Model = () => (
  <svg viewBox="0 0 540 740" className="absolute left-1/2 top-[63px] -ml-[261px] h-[740px] w-[540px]" role="img" aria-label="Wood pellet grill model">
    <defs>
      <linearGradient id="lid" x1="0" y1="0" x2="0.5" y2="1"><stop offset="0" stopColor="#5d97d4" /><stop offset="0.7" stopColor="#5b97d8" /><stop offset="1" stopColor="#4c87ca" /></linearGradient>
      <linearGradient id="barrel" gradientUnits="userSpaceOnUse" x1="560" y1="1100" x2="470" y2="1290"><stop offset="0" stopColor="#d2b350" /><stop offset="0.5" stopColor="#c6a74c" /><stop offset="1" stopColor="#a08840" /></linearGradient>
      <linearGradient id="cap" gradientUnits="userSpaceOnUse" x1="1000" y1="850" x2="1180" y2="1400"><stop offset="0" stopColor="#98b94d" /><stop offset="0.15" stopColor="#93b34b" /><stop offset="0.4" stopColor="#6d8339" /><stop offset="0.65" stopColor="#8aa947" /><stop offset="1" stopColor="#7f9d43" /></linearGradient>
      <linearGradient id="pipe"><stop offset="0" stopColor="#bdbb48" /><stop offset="0.4" stopColor="#b5b346" /><stop offset="1" stopColor="#7d7b34" /></linearGradient>
      <linearGradient id="cone"><stop offset="0" stopColor="#cbc94a" /><stop offset="0.45" stopColor="#dad75a" /><stop offset="0.5" stopColor="#f3f1a8" /><stop offset="0.56" stopColor="#d3d152" /><stop offset="1" stopColor="#c4c147" /></linearGradient>
      <linearGradient id="leg"><stop offset="0" stopColor="#64ac46" /><stop offset="0.6" stopColor="#78c24f" /><stop offset="1" stopColor="#5b9a40" /></linearGradient>
      <linearGradient id="beam" x1="0" y1="0" x2="1" y2="0.6"><stop offset="0" stopColor="#b8467b" /><stop offset="0.5" stopColor="#c94f88" /><stop offset="0.85" stopColor="#cf528b" /><stop offset="1" stopColor="#9c3a68" /></linearGradient>
      <linearGradient id="front"><stop offset="0" stopColor="#cfa957" /><stop offset="1" stopColor="#dcb25c" /></linearGradient>
    </defs>
    <g transform="scale(0.34439 0.33333)" strokeLinejoin="round" stroke="#111" strokeWidth="3">
      {/* cross braces */}
      <path d="M325,1330 L440,1392 L285,1475Z" fill="#b4593a" />
      <path d="M345,1335 L318,1370 L400,1372 M420,1385 L298,1448 M436,1390 L288,1470" fill="none" strokeWidth="4" />
      <path d="M955,1725 L1040,1690 L1180,1787 L970,1930Z" fill="#b25a3b" />
      <path d="M955,1752 L1060,1702 M958,1740 L1050,1694" fill="none" />
      {/* legs */}
      <path d="M258,1262 L143,1600 Q145,1640 190,1640 Q232,1640 238,1612 L340,1320Z" fill="url(#leg)" stroke="none" />
      <path d="M262,1272 L148,1598 M270,1278 L158,1610 M282,1285 L168,1618 M143,1592 Q145,1640 190,1638 Q235,1638 238,1612" fill="none" />
      <path d="M145,1602 L168,1625" strokeWidth="10" />
      <path d="M853,1640 L872,1960 L975,2085 L975,1900 L955,1600Z" fill="#d0ae50" stroke="none" />
      <path d="M866,1660 L880,1950 M880,1670 L893,1960 M958,1690 L975,2080" fill="none" />
      <circle cx="976" cy="1993" r="5" fill="#444" /><circle cx="976" cy="2076" r="5" fill="#444" />
      {/* beam */}
      <path d="M292,1155 L258,1240 V1265 L872,1668 Q910,1688 955,1685 L955,1565 L862,1500Z" fill="url(#beam)" strokeWidth="2" />
      <path d="M302,1165 L272,1268 M866,1520 L872,1665 M945,1570 L948,1683 M880,1672 L955,1662" fill="none" />
      {/* barrel */}
      <path d="M330,393 C200,475 85,650 86,820 C88,960 105,1060 165,1088 L905,1550 L1262,796 L480,385 Q400,358 330,393Z" fill="url(#barrel)" stroke="none" />
      <path d="M425,374 L485,388 L1262,795 L1210,786Z" fill="#d8b961" stroke="none" />
      <path d="M480,384 Q400,358 330,393 C200,475 85,650 86,820 C88,960 105,1060 165,1088" fill="none" strokeWidth="5" />
      <path d="M165,1088 L905,1550" fill="none" strokeDasharray="3 6" />
      <path d="M95,928 L872,1408" fill="none" />
      {/* lid */}
      <path d="M425,375 C375,375 348,392 310,418 C190,500 98,650 96,825 L120,845 L858,1317 C860,1250 870,1210 884,1165 C930,985 1050,840 1210,785Z" fill="url(#lid)" />
      <path d="M425,375 L1210,785" strokeWidth="6" />
      <path d="M405,400 L1127,778" strokeWidth="3" strokeDasharray="7 2" />
      <path d="M405,400 L340,425 M325,436 L280,470 M1108,785 L1098,795 M135,720 V770" fill="none" strokeWidth="1" strokeDasharray="8 8" />
      <path d="M1050,777 L1073,788 L1057,801 L1037,790Z" fill="none" strokeWidth="1" />
      <path d="M735,1195 L862,1290 M120,845 L690,1195" fill="none" strokeWidth="4" />
      {/* end cap and rim */}
      <path d="M1262,796 Q1358,838 1361,975 L1362,1200 L1005,1580 Q925,1580 895,1525 C865,1440 866,1290 892,1180 C945,980 1060,825 1210,795 Q1240,790 1262,796Z" fill="url(#cap)" strokeWidth="6" />
      <path d="M1210,789 C1060,830 936,985 886,1175 C868,1255 864,1300 866,1400" fill="none" strokeWidth="16" />
      <path d="M1212,790 C1060,830 936,985 886,1175 C868,1255 864,1300 866,1404" fill="none" stroke="#dfb656" strokeWidth="9" />
      <circle cx="986" cy="1389" r="4" fill="#333" />
      {/* hinges */}
      <g strokeWidth="2">
        <path d="M585,440 L598,434 L610,444 L604,464 L585,458Z" fill="#dd864c" />
        <path d="M604,443 L630,451 L622,478 L596,463Z" fill="#4cb6b4" />
        <ellipse cx="625" cy="465" rx="7" ry="12" fill="#5b352b" />
        <path d="M990,650 L1003,644 L1015,654 L1009,674 L990,668Z" fill="#dd864c" />
        <path d="M1010,653 L1038,662 L1030,688 L1002,673Z" fill="#4cb6b4" />
        <ellipse cx="1033" cy="676" rx="7" ry="12" fill="#5b352b" />
      </g>
      {/* chimney */}
      <path d="M229,180 L242,446 Q280,412 328,392 L322,180Z" fill="url(#pipe)" stroke="none" />
      <ellipse cx="274" cy="155" rx="70" ry="31" fill="#c9c74b" strokeWidth="5" />
      <path d="M270,88 L340,142 Q348,180 274,184 Q205,180 208,142Z" fill="url(#cone)" stroke="none" />
      {/* handle */}
      <path d="M140,803 C95,812 85,840 108,864 L680,1208 Q735,1238 800,1200" fill="none" stroke="#cd7f42" strokeWidth="31" />
      <path d="M140,802 C95,811 85,839 108,862 L680,1206 Q735,1236 800,1198" fill="none" stroke="#f6a45d" strokeWidth="26" />
      <ellipse cx="144" cy="804" rx="9" ry="16" fill="#d9853f" strokeWidth="2" />
      <ellipse cx="804" cy="1199" rx="10" ry="17" fill="#e28e48" strokeWidth="2" />
      <path d="M120,795 Q132,805 128,822 M106,878 Q98,860 118,850 M684,1190 Q668,1205 680,1228 M780,1195 Q794,1205 790,1224" fill="none" />
      {/* caster under the hopper */}
      <path d="M1195,1805 L1215,1850 Q1260,1880 1300,1850 V1800Z" fill="#3f7fc0" />
      <path d="M1200,1812 L1222,1850" strokeWidth="7" />
      <circle cx="1198" cy="1824" r="9" fill="#333" />
      <path d="M1300,1820 L1385,1755 Q1402,1790 1392,1820 L1350,1870 Q1310,1885 1280,1868Z" fill="#d84a4a" />
      <path d="M1362,1775 L1394,1790 M1360,1790 L1396,1804 M1358,1805 L1394,1818 M1352,1820 L1386,1832 M1345,1835 L1374,1846 M1300,1840 L1345,1830 L1330,1872 M1350,1790 L1340,1865 M1290,1855 L1345,1845" fill="none" strokeWidth="4" />
      {/* hopper */}
      <path d="M1015,1143 L1042,1128 L1290,1270 L1285,1836 L1250,1836 L1003,1678Z" fill="url(#front)" />
      <path d="M1288,1265 L1508,1150 L1465,1695 L1270,1838Z" fill="#d3ab5b" />
      <path d="M1281,1280 L1307,1280 L1280,1836 L1250,1836Z" fill="#dfb65e" />
      <path d="M1040,1112 V1142 L1275,1282 H1310 L1515,1152 L1518,1106 L1310,1248 L1283,1248Z" fill="#dcb35e" />
      <path d="M1270,967 L1512,1098 Q1522,1106 1510,1116 L1320,1245 Q1300,1256 1280,1244 L1045,1118 Q1036,1110 1046,1104Z" fill="#edc064" strokeWidth="4" />
      <path d="M1040,1116 L1280,1250 Q1300,1258 1320,1247 L1516,1116" fill="none" strokeWidth="6" />
      <path d="M1025,1145 L1043,1170 V1205 L1028,1195 M1045,1170 L1272,1308 M1030,1240 L1043,1240 V1205 M1026,1140 L1014,1595 L1032,1602 L1030,1690" fill="none" strokeWidth="2" />
      <path d="M1303,1325 L1326,1335 L1314,1560 L1340,1608 M1314,1560 L1480,1450 L1424,1548 M1303,1325 L1310,1560" fill="none" />
      <circle cx="1035" cy="1218" r="4" fill="#333" /><circle cx="1021" cy="1644" r="4" fill="#333" />
      <circle cx="1139" cy="1755" r="4" fill="#333" /><circle cx="1370" cy="1755" r="4" fill="#333" />
      {/* control panel */}
      <path d="M1085,1312 L1238,1400 L1232,1484 L1080,1398Z" fill="#e0854b" strokeWidth="5" />
      <path d="M1124,1353 L1190,1390 L1188,1422 L1120,1390Z M1082,1370 L1185,1425 M1205,1438 L1220,1446" fill="none" />
      <circle cx="1196" cy="1435" r="12" fill="#6b3b24" /><path d="M1190,1422 L1205,1430" strokeWidth="5" />
      <circle cx="1093" cy="1328" r="2" /><circle cx="1226" cy="1405" r="2" /><circle cx="1220" cy="1468" r="2" /><circle cx="1090" cy="1395" r="2" />
      {/* wheel */}
      {treads.map((p, i) => <path key={i} d={`M${p.x},${p.y} l48,-34`} stroke="#8db446" strokeWidth="18" />)}
      {treads.map((p, i) => <path key={i} d={`M${p.x},${p.y} l50,-36`} strokeWidth="6" />)}
      <ellipse cx="847" cy="2081" rx="76" ry="110" transform="rotate(-20 847 2081)" fill="#a6cd59" strokeWidth="5" />
      <ellipse cx="856" cy="2074" rx="27" ry="38" transform="rotate(-20 856 2074)" fill="none" />
      <ellipse cx="854" cy="2074" rx="15" ry="21" transform="rotate(-20 854 2074)" fill="none" />
      {/* logo marks on the beam and the brace */}
      <path d="M388,1300 L398,1285 L430,1283 L446,1300 L440,1340 L425,1330 L428,1312 L412,1318 L420,1296Z" fill="#6b3f2c" strokeWidth="4" />
      <path d="M962,1800 L968,1785 L990,1772 L992,1790 L984,1796 L982,1786Z" fill="#1c1210" />
    </g>
    <text x="156" y="450" transform="rotate(31 156 450)" fontSize="19" fontWeight="bold" fontFamily="Liberation Sans, sans-serif" stroke="#2b1a22">
      <tspan fill="#6b4534">AUTO</tspan><tspan fill="#f3eef0">DESK</tspan>
    </text>
    <text x="344" y="599" transform="rotate(-29 344 599)" fontSize="11" fontWeight="bold" fontFamily="Liberation Sans, sans-serif" fill="#1c1210">AUTO</text>
  </svg>
);

const ViewCube = () => (
  <svg viewBox="0 0 100 110" className="absolute right-[8px] top-[16px] h-[110px] w-[100px]" role="img" aria-label="View cube">
    <defs><radialGradient id="cubeShadow"><stop offset="0.5" stopColor="#bbb" /><stop offset="1" stopColor="#fff" stopOpacity="0" /></radialGradient></defs>
    <ellipse cx="48" cy="70" rx="42" ry="22" fill="url(#cubeShadow)" />
    <path d="M11 28 L46 12 L82 28 L78 66 L47 88 L14 67Z" fill="#efefef" stroke="#8a8a8a" strokeWidth="0.8" />
    <path d="M11 28 L47 48 L82 28 L46 12Z" fill="#f4f4f4" stroke="#8a8a8a" strokeWidth="0.8" />
    <path d="M47 48 L82 28 L78 66 L47 88Z" fill="#ececec" stroke="#8a8a8a" strokeWidth="0.8" />
    <path d="M9 21 L14 67" stroke="#8a8af0" strokeWidth="2" />
    <path d="M14 67 L53 94" stroke="#f29a9a" strokeWidth="2.5" />
    <g fontFamily="Liberation Sans, sans-serif" fontWeight="bold" fill="#8d8f93" fontSize="8">
      <text x="38" y="28" transform="rotate(22 38 28)">TOP</text>
      <text x="16" y="57" transform="rotate(27 16 57)">FRONT</text>
      <text x="54" y="70" transform="rotate(-32 54 70)">RIGHT</text>
      <text x="4" y="19" fontSize="13" fill="#8f8ff2">Z</text>
      <text x="53" y="103" fontSize="13" fill="#f49a96">X</text>
    </g>
  </svg>
);

const NavBar = () => (
  <div className="mb-[2px] flex h-6 items-center bg-[#f1f1f1] pl-1 pr-[2px] text-[#3a3d44]">
    <button className="flex w-[30px] items-center justify-between" aria-label="Orbit">
      <svg viewBox="0 0 18 18" className="size-[18px]" fill="none" stroke="currentColor" strokeWidth="1.3"><path d="M9 1 V17 M7 3 H11" /><path d="M6 12 Q1 11 1 9 Q2 6 9 6 Q16 6 17 9 Q16 12 10 12 M13 9 L10 12 L13 15" /></svg>
      <Caret />
    </button>
    <button className="flex w-6 justify-center" aria-label="Look at">
      <svg viewBox="0 0 18 18" className="size-[18px]" fill="none" stroke="currentColor" strokeWidth="1.3"><path d="M2 6 H16 V16 H2Z M5 9 H13 V13 H5Z M4 6 L7 2 V4 H12 L14 2" /></svg>
    </button>
    <button className="ml-[2px] flex w-6 justify-center" aria-label="Pan">
      <svg viewBox="0 0 18 18" className="size-[18px]" fill="#fff" stroke="currentColor" strokeWidth="1.2"><path d="M6 16 L1.5 10 Q2 8 4 9.5 L6 11 L4 4 Q5 2 6.5 4 L8 8 L8 2 Q9 0.5 10 2 L10.5 8 L12 3 Q13.5 2 13.7 4 L13 9 L15 6 Q17 6 16 8 L13 16Z" /></svg>
    </button>
    <button className="ml-[2px] flex w-6 justify-center" aria-label="Zoom">
      <svg viewBox="0 0 18 18" className="size-[18px]" fill="#eef4fb" stroke="currentColor" strokeWidth="1.3"><circle cx="6" cy="7" r="4.5" /><path d="M9.5 10.5 L14 15" strokeWidth="3" /><path d="M12 4 H17 M14.5 1.5 V6.5 M12 9 H17" /></svg>
    </button>
    <button className="ml-1 flex w-[30px] items-center justify-between" aria-label="Zoom window">
      <svg viewBox="0 0 18 18" className="size-[18px]" fill="#eef4fb" stroke="currentColor" strokeWidth="1.2"><path d="M1 1 H17 V17 H1Z" fill="none" strokeDasharray="2 2" /><circle cx="8" cy="8" r="6" /><path d="M12 12 L17 17" strokeWidth="3" /></svg>
      <Caret />
    </button>
    <button className="ml-1 flex w-[27px] items-center justify-between" aria-label="Display settings">
      <svg viewBox="0 0 18 18" className="size-[17px]" fill="#fff" stroke="currentColor" strokeWidth="1.3"><path d="M1 1 H17 V14 H1Z" /><path d="M4 4 H14 V11 H4Z" fill="#8fb2e6" /><path d="M6 14 V17 H12 V14" /></svg>
      <Caret />
    </button>
    <button className="ml-1 flex w-[27px] items-center justify-between" aria-label="Grid and snaps">
      <svg viewBox="0 0 18 18" className="size-[17px]" fill="#fff" stroke="currentColor" strokeWidth="1"><path d="M1 1 H17 V17 H1Z M5 1 V17 M9 1 V17 M13 1 V17 M1 5 H17 M1 9 H17 M1 13 H17" /></svg>
      <Caret />
    </button>
    <button className="ml-1 flex w-[27px] items-center justify-between" aria-label="Viewports">
      <svg viewBox="0 0 18 18" className="size-[17px]" fill="#a9c2ea" stroke="#34507f" strokeWidth="1.2"><path d="M1 2 H8 V8 H1Z M10 2 H17 V8 H10Z M1 10 H8 V16 H1Z M10 10 H17 V16 H10Z" /></svg>
      <Caret />
    </button>
  </div>
);

const players = [
  { label: 'Go to start', d: 'M1 1 V15 M15 2 V14 L4 8Z' },
  { label: 'Step back', d: 'M11 2 V14 L1 8Z M14 5 V11' },
  { label: 'Play', d: 'M2 0 V16 L15 8Z' },
  { label: 'Step forward', d: 'M5 2 V14 L15 8Z M2 5 V11' },
  { label: 'Go to end', d: 'M15 1 V15 M1 2 V14 L12 8Z' },
];

const Timeline = () => (
  <footer className="relative flex h-[50px] shrink-0 overflow-hidden border-t border-[#d0d0d0] bg-[#f1f1f1] pl-1">
    <div className="flex w-[137px] shrink-0 flex-col">
      <div className="h-[6px] w-[34px] rounded-b bg-[#c8c8c8]" />
      <div className="mt-[15px] flex gap-[11px] pl-[5px]">
        {players.map((p) => (
          <button key={p.label} aria-label={p.label}>
            <svg viewBox="0 0 16 16" className="size-[14px]"><path d={p.d} fill="#555" stroke="#555" strokeWidth="1.6" /></svg>
          </button>
        ))}
      </div>
    </div>
    <ol className="flex pt-[15px]">
      {timeline.map((k, i) => (
        <li key={i} className="flex w-6 shrink-0 flex-col items-center">
          <button aria-label={timelineKeys[k]}><Icon name={timelineKeys[k]} className="size-4" /></button>
          <span className={`mt-[2px] h-[6px] w-[2px] ${i > 13 && i < 17 ? 'bg-[#8b8b8b]' : 'bg-[#cacaca]'}`} />
          <span className={`h-[2px] ${i === 0 ? 'ml-[11px] w-[13px]' : i === 16 ? 'mr-[11px] w-[13px]' : 'w-6'} ${i > 12 && i < 17 ? 'bg-[#8b8b8b]' : 'bg-[#cacaca]'}`} />
          {i === 13 && (
            <span className="relative -mt-[6px] flex h-[9px] w-[9px] items-center justify-center bg-[#7d7d7d]"><span className="h-[2px] w-[5px] bg-white" /></span>
          )}
        </li>
      ))}
    </ol>
    <button className="ml-auto mr-[12px] pt-1" aria-label="Timeline settings"><Icon name="gear" className="size-4" /></button>
    <svg viewBox="0 0 46 20" className="absolute bottom-0 right-[31px] h-5 w-[46px]" aria-hidden="true">
      <path d="M3 0 H43 L46 6 V20 H0 V3Z" fill="#fd9548" />
      <path d="M43 1 L46 7 V20 H43Z" fill="#a5673b" />
      <path d="M22 20 V9.5 H33 M22 17 H31" stroke="#fff" strokeWidth="5" fill="none" />
    </svg>
  </footer>
);

export default function App() {
  return (
    <div className="flex min-h-screen flex-col border-b-2 border-black bg-white font-['Liberation_Sans',Arial,sans-serif]">
      <TopBar />
      <Ribbon />
      <main className="relative flex flex-1 flex-col overflow-hidden border-l border-[#dcdcdc] pt-1">
        <Model />
        <div className="relative -ml-px"><Browser /></div>
        <ViewCube />
        <svg viewBox="0 0 12 20" className="absolute left-[66%] top-[234px] h-5 w-3" aria-hidden="true">
          <path d="M0.5 0.5 V16 L4 12.5 L6.5 19 L9 18 L6.5 12 H11.5Z" fill="#fff" stroke="#000" />
        </svg>
        <button className="absolute right-0 top-[282px]" aria-label="Show side panel">
          <svg viewBox="0 0 30 96" className="h-24 w-[30px]">
            <path d="M14 66 Q13 92 30 94 V60Z" fill="#969696" />
            <path d="M0.5 0.5 H30 V80 L0.5 51Z" fill="#efefef" />
            <path d="M30 0.5 H0.5 V51" fill="none" stroke="#a5a5a5" />
            <path d="M17 15 H23 L17 24 L23 33 H17 L10 24Z" fill="#3494c4" />
            <path d="M8 34 H25" stroke="#999" />
          </svg>
        </button>
        <div className="relative -ml-px mt-auto grid grid-cols-[1fr_auto_1fr] items-center pb-[5px] pl-1">
          <div className="flex h-6 w-[300px] items-center border-2 border-t-0 border-[#cfcfcf] bg-[#f1f1f1] pl-[23px] font-[Roboto,sans-serif] text-[11px] text-[#5a5a5a]">
            <span className="flex-1 pt-[2px]">COMMENTS</span>
            <button className="mr-[10px]" aria-label="Expand comments">
              <svg viewBox="0 0 9 9" className="size-[9px]"><circle cx="4.5" cy="4.5" r="4.5" fill="#222" /><path d="M2 4.5 H7 M4.5 2 V7" stroke="#fff" strokeWidth="1.3" /></svg>
            </button>
          </div>
          <NavBar />
          <button className="mr-[11px] justify-self-end" aria-label="Autodesk Assistant">
            <svg viewBox="0 0 14 14" className="size-[14px]"><path d="M7 0 Q14 0 14 7 V14 H7 Q0 14 0 7 Q0 0 7 0Z" fill="#000" /><path d="M3 9 L8 5 H11 V9 M6 9 H8" fill="none" stroke="#fff" strokeWidth="1.5" /></svg>
          </button>
        </div>
      </main>
      <Timeline />
    </div>
  );
}
